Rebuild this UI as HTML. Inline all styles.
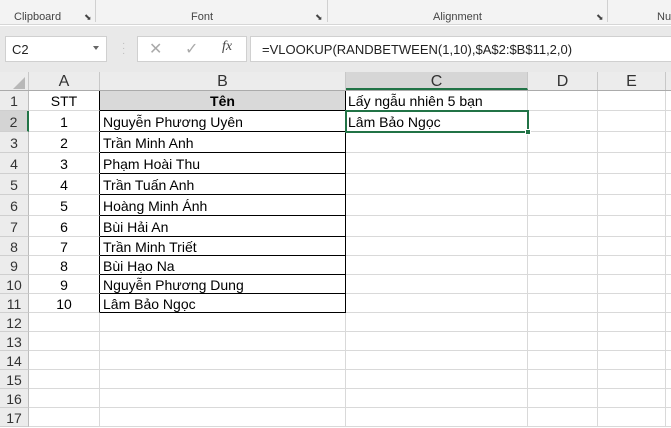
<!DOCTYPE html>
<html><head><meta charset="utf-8"><style>
*{box-sizing:border-box;margin:0;padding:0}
body{width:671px;height:428px;overflow:hidden;background:#fff;font-family:"Liberation Sans",Arial,sans-serif;position:relative;color:#000}
.a{position:absolute}
.rib{left:0;top:0;width:671px;height:25px;background:#f3f3f3;border-bottom:1px solid #d6d6d6}
.rl{font-size:11px;color:#444;top:11px}
.fb{left:0;top:26px;width:671px;height:46px;background:#e9e9e9}
.box{background:#fff;border:1px solid #d0d0d0}
.grid{left:0;top:91px;width:671px}
.row{display:flex;font-size:14px;line-height:22px}
.row div{border-right:1px solid #d9d9d9;border-bottom:1px solid #d9d9d9;overflow:visible;white-space:nowrap}
.h{width:29px;background:#ececec;text-align:center;color:#333;border-right:1px solid #bcbcbc!important;border-bottom:1px solid #cfcfcf!important;font-size:14px}
.cA{width:71px;text-align:center}
.cB{width:246px;padding-left:3px}
.cC{width:182px;padding-left:2px}
.cD{width:70px}
.cE{width:68px}
.cF{width:5px;border-right:none!important}
.k .cA{border-right:1px solid #000!important}
.k .cB{border-right:1px solid #000!important;border-bottom:1px solid #000!important}
.ch{left:0;top:72px;width:671px;height:19px;display:flex;background:#ececec;border-bottom:1px solid #ababab;font-size:16px;color:#333}
.ch div{border-right:1px solid #c8c8c8;text-align:center;line-height:19px}
</style></head><body>
<div class="a rib"></div>
<div class="a rl" style="left:14px">Clipboard</div>
<div class="a rl" style="left:84px;font-size:9px;top:12px">⬊</div>
<div class="a" style="left:95px;top:0;width:1px;height:22px;background:#d0d0d0"></div>
<div class="a rl" style="left:191px">Font</div>
<div class="a rl" style="left:315px;font-size:9px;top:12px">⬊</div>
<div class="a" style="left:327px;top:0;width:1px;height:22px;background:#d0d0d0"></div>
<div class="a rl" style="left:433px">Alignment</div>
<div class="a rl" style="left:596px;font-size:9px;top:12px">⬊</div>
<div class="a" style="left:607px;top:0;width:1px;height:22px;background:#d0d0d0"></div>
<div class="a rl" style="left:657px">Nu</div>
<div class="a fb"></div>
<div class="a box" style="left:5px;top:36px;width:102px;height:26px"></div>
<div class="a" style="left:12px;top:42px;font-size:13px;color:#222">C2</div>
<div class="a" style="left:93px;top:46px;width:0;height:0;border-left:3px solid transparent;border-right:3px solid transparent;border-top:4px solid #666"></div>
<div class="a" style="left:122px;top:41px;color:#bbb;font-size:10px;line-height:5px">·<br>·<br>·</div>
<div class="a box" style="left:137px;top:36px;width:110px;height:26px"></div>
<div class="a" style="left:149px;top:39px;color:#aaa;font-size:16px">✕</div>
<div class="a" style="left:185px;top:39px;color:#aaa;font-size:16px">✓</div>
<div class="a" style="left:222px;top:39px;color:#444;font-size:14px;font-style:italic;font-family:'Liberation Serif',serif">fx</div>
<div class="a box" style="left:250px;top:36px;width:425px;height:26px"></div>
<div class="a" style="left:262px;top:42px;font-size:13px;color:#222">=VLOOKUP(RANDBETWEEN(1,10),$A$2:$B$11,2,0)</div>
<div class="a ch">
<div style="width:29px;position:relative"><span style="position:absolute;left:13px;top:5px;width:0;height:0;border-left:12px solid transparent;border-bottom:12px solid #b8b8b8"></span></div>
<div style="width:71px">A</div><div style="width:246px">B</div>
<div style="width:182px;background:#d6d6d6;border-bottom:2px solid #217346">C</div>
<div style="width:70px">D</div><div style="width:68px">E</div><div style="width:5px;border:none"></div>
</div>
<div class="a grid">
<div class="row k" style="height:20px;line-height:21px"><div class="h">1</div><div class="cA">STT</div><div class="cB" style="background:#d9d9d9;text-align:center;font-weight:bold;padding:0">Tên</div><div class="cC">Lấy ngẫu nhiên 5 bạn</div><div class="cD"></div><div class="cE"></div><div class="cF"></div></div>
<div class="row k" style="height:21px"><div class="h" style="background:#d4d4d4;border-right:2px solid #217346!important">2</div><div class="cA">1</div><div class="cB">Nguyễn Phương Uyên</div><div class="cC">Lâm Bảo Ngọc</div><div class="cD"></div><div class="cE"></div><div class="cF"></div></div>
<div class="row k" style="height:21px"><div class="h">3</div><div class="cA">2</div><div class="cB">Trần Minh Anh</div><div class="cC"></div><div class="cD"></div><div class="cE"></div><div class="cF"></div></div>
<div class="row k" style="height:21px"><div class="h">4</div><div class="cA">3</div><div class="cB">Phạm Hoài Thu</div><div class="cC"></div><div class="cD"></div><div class="cE"></div><div class="cF"></div></div>
<div class="row k" style="height:21px"><div class="h">5</div><div class="cA">4</div><div class="cB">Trần Tuấn Anh</div><div class="cC"></div><div class="cD"></div><div class="cE"></div><div class="cF"></div></div>
<div class="row k" style="height:21px"><div class="h">6</div><div class="cA">5</div><div class="cB">Hoàng Minh Ánh</div><div class="cC"></div><div class="cD"></div><div class="cE"></div><div class="cF"></div></div>
<div class="row k" style="height:21px"><div class="h">7</div><div class="cA">6</div><div class="cB">Bùi Hải An</div><div class="cC"></div><div class="cD"></div><div class="cE"></div><div class="cF"></div></div>
<div class="row k" style="height:19px;line-height:20px"><div class="h">8</div><div class="cA">7</div><div class="cB">Trần Minh Triết</div><div class="cC"></div><div class="cD"></div><div class="cE"></div><div class="cF"></div></div>
<div class="row k" style="height:19px;line-height:20px"><div class="h">9</div><div class="cA">8</div><div class="cB">Bùi Hạo Na</div><div class="cC"></div><div class="cD"></div><div class="cE"></div><div class="cF"></div></div>
<div class="row k" style="height:19px;line-height:20px"><div class="h">10</div><div class="cA">9</div><div class="cB">Nguyễn Phương Dung</div><div class="cC"></div><div class="cD"></div><div class="cE"></div><div class="cF"></div></div>
<div class="row k" style="height:19px;line-height:20px"><div class="h">11</div><div class="cA">10</div><div class="cB">Lâm Bảo Ngọc</div><div class="cC"></div><div class="cD"></div><div class="cE"></div><div class="cF"></div></div>
<div class="row" style="height:19px;line-height:20px"><div class="h">12</div><div class="cA"></div><div class="cB"></div><div class="cC"></div><div class="cD"></div><div class="cE"></div><div class="cF"></div></div>
<div class="row" style="height:19px;line-height:20px"><div class="h">13</div><div class="cA"></div><div class="cB"></div><div class="cC"></div><div class="cD"></div><div class="cE"></div><div class="cF"></div></div>
<div class="row" style="height:19px;line-height:20px"><div class="h">14</div><div class="cA"></div><div class="cB"></div><div class="cC"></div><div class="cD"></div><div class="cE"></div><div class="cF"></div></div>
<div class="row" style="height:19px;line-height:20px"><div class="h">15</div><div class="cA"></div><div class="cB"></div><div class="cC"></div><div class="cD"></div><div class="cE"></div><div class="cF"></div></div>
<div class="row" style="height:19px;line-height:20px"><div class="h">16</div><div class="cA"></div><div class="cB"></div><div class="cC"></div><div class="cD"></div><div class="cE"></div><div class="cF"></div></div>
<div class="row" style="height:19px;line-height:20px"><div class="h">17</div><div class="cA"></div><div class="cB"></div><div class="cC"></div><div class="cD"></div><div class="cE"></div><div class="cF"></div></div>
</div>
<div class="a" style="left:345px;top:110px;width:184px;height:23px;border:2px solid #217346"></div>
<div class="a" style="left:525px;top:129px;width:6px;height:6px;background:#217346;border:1px solid #fff"></div>
</body></html>
